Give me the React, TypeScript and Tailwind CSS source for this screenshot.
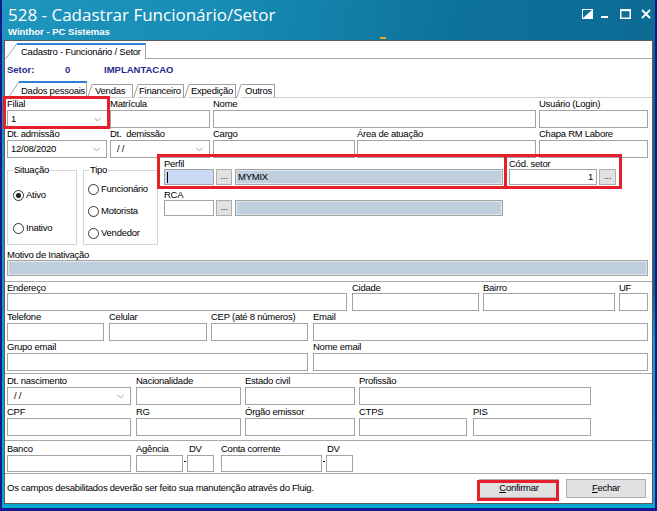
import React from "react";
import { ChevronDown } from "lucide-react";

const Lbl = ({ children, cls = "h-[12px] leading-[12px]" }: { children?: React.ReactNode; cls?: string }) => (
  <div className={"whitespace-nowrap " + cls}>{children}</div>
);

const Box = ({ cls = "h-[18px]", children }: { cls?: string; children?: React.ReactNode }) => (
  <div className={"border border-[#a3a3a3] bg-white flex items-center " + cls}>{children}</div>
);

const Combo = ({ value, cls = "h-[18px]", textCls = "pl-[3px]" }: { value: string; cls?: string; textCls?: string }) => (
  <div className={"border border-[#a3a3a3] bg-white flex items-center justify-between pr-[4px] " + cls}>
    <span className={textCls}>{value}</span>
    <ChevronDown size={11} strokeWidth={1.2} color="#555" />
  </div>
);

const Btn3 = ({ cls }: { cls: string }) => (
  <div className={"h-[16px] border border-[#adadad] bg-[#e1e1e1] flex items-center justify-center leading-none pb-[3px] text-[#222] " + cls}>
    ...
  </div>
);

const Radio = ({ label, checked }: { label: string; checked?: boolean }) => (
  <div className="flex items-center h-[12px]">
    <div className="w-[11px] h-[11px] rounded-full border border-[#333] bg-white flex items-center justify-center">
      {checked && <div className="w-[5px] h-[5px] rounded-full bg-[#1e1e1e]" />}
    </div>
    <span className="ml-[2px]">{label}</span>
  </div>
);

const Diag = ({ cls, h, w }: { cls: string; h: number; w: number }) => (
  <svg className={cls} viewBox={`0 0 ${w} ${h}`}>
    <line x1="0.5" y1={h} x2={w} y2="0.5" stroke="#a0a0a0" strokeWidth="1" />
  </svg>
);

const Sep = () => <div className="-ml-[2px] h-px bg-[#a9a9a9]" />;

export default function App() {
  return (
    <div className="relative w-[657px] h-[511px] bg-[#17178f] pl-[2px] pr-[2px] pb-[3px] overflow-hidden font-['Liberation_Sans',Arial,sans-serif] text-[9.5px] tracking-[-0.25px] text-black">
      <div className="flex flex-col h-full bg-[linear-gradient(to_bottom,rgba(6,166,200,0)_58%,#07a6c9_68%,#08a9cb_100%),linear-gradient(100deg,#1f96bd_0%,#178cb4_30%,#0d729b_62%,#0b6890_100%)]">
        {/* title bar */}
        <div className="h-[40px] flex justify-between">
          <div className="flex flex-col pl-[6px] pt-[4px] text-white tracking-normal">
            <div className="h-[22px] leading-[22px] text-[17px] font-['Open_Sans',Arial,sans-serif] whitespace-nowrap">
              528 - Cadastrar Funcionário/Setor
            </div>
            <div className="h-[12px] leading-[12px] text-[9.5px] font-bold whitespace-nowrap">Winthor - PC Sistemas</div>
          </div>
          <div className="flex items-start pt-[9px] pr-[4px]">
            <svg width="11" height="10" viewBox="0 0 11 10">
              <rect x="0.5" y="0.5" width="10" height="9" fill="none" stroke="#fff" strokeWidth="1" />
              <polygon points="0.5,9.5 10.5,0.5 10.5,9.5" fill="#fff" />
            </svg>
            <div className="ml-[8px] mt-[7px] w-[7px] h-[2px] bg-white" />
            <svg className="ml-[12px]" width="11" height="10" viewBox="0 0 11 10">
              <rect x="0.75" y="1" width="9.5" height="8.25" fill="none" stroke="#fff" strokeWidth="1.5" />
              <line x1="0" y1="1.2" x2="11" y2="1.2" stroke="#fff" strokeWidth="2" />
            </svg>
            <svg className="ml-[10px]" width="10" height="10" viewBox="0 0 10 10">
              <path d="M1 1 L9 9 M9 1 L1 9" stroke="#fff" strokeWidth="1.8" />
            </svg>
          </div>
        </div>

        {/* main panel */}
        <div className="flex-1 mx-[2px] mb-[4px] bg-white border border-[#5a5a5a] flex flex-col">
          {/* top tab */}
          <div className="flex items-end h-[18px]">
            <Diag cls="w-[12px] h-[16px]" w={12} h={16} />
            <div className="w-[129px] h-[16px] border-t-2 border-[#2f7fd6] border-r border-r-[#a0a0a0] flex items-center pl-[4px] whitespace-nowrap">
              Cadastro - Funcionário / Setor
            </div>
            <div className="flex-1 h-px bg-[#a9a9a9]" />
          </div>

          {/* setor */}
          <div className="h-[21px] flex items-center pl-[2px] pt-[2px] font-bold text-[#1f2a8a] text-[9.5px] tracking-normal">
            <span className="w-[58px]">Setor:</span>
            <span className="w-[39px]">0</span>
            <span>IMPLANTACAO</span>
          </div>

          {/* tabs */}
          <div className="flex items-end h-[18px]">
            <div className="w-[3px] h-px bg-[#d0d0d0]" />
            <Diag cls="w-[11px] h-[17px]" w={11} h={17} />
            <div className="w-[68px] h-[17px] border-t-2 border-[#2f7fd6] border-r border-r-[#a0a0a0] flex items-center pl-[2px] pt-[1px] whitespace-nowrap">
              Dados pessoais
            </div>
            <Diag cls="w-[5px] h-[14px]" w={5} h={14} />
            <div className="w-[41px] h-[14px] border-t border-r border-b border-[#a0a0a0] border-b-[#d0d0d0] flex items-center pl-[3px]">Vendas</div>
            <Diag cls="w-[5px] h-[14px]" w={5} h={14} />
            <div className="w-[46px] h-[14px] border-t border-r border-b border-[#a0a0a0] border-b-[#d0d0d0] flex items-center pl-[1px]">Financeiro</div>
            <Diag cls="w-[5px] h-[14px]" w={5} h={14} />
            <div className="w-[47px] h-[14px] border-t border-r border-b border-[#a0a0a0] border-b-[#d0d0d0] flex items-center pl-[2px]">Expedição</div>
            <Diag cls="w-[5px] h-[14px]" w={5} h={14} />
            <div className="w-[34px] h-[14px] border-t border-r border-b border-[#a0a0a0] border-b-[#d0d0d0] flex items-center pl-[4px]">Outros</div>
            <div className="flex-1 h-px bg-[#d0d0d0]" />
          </div>

          {/* form */}
          <div className="flex-1 flex flex-col pl-[2px]">
            {/* row 1 */}
            <div className="flex">
              <div className="flex flex-col w-[101px]">
                <Lbl>Filial</Lbl>
                <Combo value="1" />
              </div>
              <div className="flex flex-col w-[100px] ml-[2px]">
                <Lbl>Matrícula</Lbl>
                <Box />
              </div>
              <div className="flex flex-col w-[323px] ml-[3px]">
                <Lbl>Nome</Lbl>
                <Box />
              </div>
              <div className="flex flex-col w-[109px] ml-[3px]">
                <Lbl>Usuário (Login)</Lbl>
                <Box />
              </div>
            </div>
            {/* row 2 */}
            <div className="flex">
              <div className="flex flex-col w-[100px]">
                <Lbl>Dt. admissão</Lbl>
                <Combo value="12/08/2020" />
              </div>
              <div className="flex flex-col w-[100px] ml-[3px]">
                <Lbl>Dt.&nbsp;&nbsp;demissão</Lbl>
                <Combo value="/ /" textCls="pl-[6px]" />
              </div>
              <div className="flex flex-col w-[142px] ml-[3px]">
                <Lbl>Cargo</Lbl>
                <Box />
              </div>
              <div className="flex flex-col w-[179px] ml-[2px]">
                <Lbl>Área de atuação</Lbl>
                <Box />
              </div>
              <div className="flex flex-col w-[109px] ml-[3px]">
                <Lbl>Chapa RM Labore</Lbl>
                <Box />
              </div>
            </div>

            {/* middle */}
            <div className="flex h-[91px]">
              <div className="relative mt-[12px] w-[70px] h-[75px] border border-[#d5d5d5]">
                <div className="absolute -top-[7px] left-[5px] bg-white px-[1px] leading-[12px]">Situação</div>
                <div className="flex flex-col pt-[18px] pl-[5px] gap-[21px]">
                  <Radio label="Ativo" checked />
                  <Radio label="Inativo" />
                </div>
              </div>
              <div className="relative ml-[6px] mt-[12px] w-[75px] h-[75px] border border-[#d5d5d5]">
                <div className="absolute -top-[7px] left-[5px] bg-white px-[1px] leading-[12px]">Tipo</div>
                <div className="flex flex-col pt-[12px] pl-[4px] gap-[10px]">
                  <Radio label="Funcionário" />
                  <Radio label="Motorista" />
                  <Radio label="Vendedor" />
                </div>
              </div>
              <div className="ml-[6px] flex flex-col">
                <Lbl cls="h-[11px] leading-[11px]">Perfil</Lbl>
                <div className="flex h-[16px]">
                  <div className="w-[50px] h-[16px] border border-[#a3a3a3] bg-[#c9daf2] flex items-center pl-[2px]">
                    <div className="w-px h-[11px] bg-black" />
                  </div>
                  <Btn3 cls="ml-[2px] w-[16px]" />
                  <div className="ml-[3px] w-[268px] h-[16px] border border-[#a3a3a3] bg-[#c0cfdd] shadow-[inset_0_0_0_1px_#dfe7ee] flex items-center pl-[2px]">
                    MYMIX
                  </div>
                </div>
                <Lbl cls="mt-[4px] h-[11px] leading-[11px]">RCA</Lbl>
                <div className="flex h-[16px]">
                  <div className="w-[50px] h-[16px] border border-[#a3a3a3] bg-white" />
                  <Btn3 cls="ml-[2px] w-[16px]" />
                  <div className="ml-[3px] w-[268px] h-[16px] border border-[#a3a3a3] bg-[#c0cfdd] shadow-[inset_0_0_0_1px_#dfe7ee]" />
                </div>
              </div>
              <div className="ml-[6px] flex flex-col">
                <Lbl cls="h-[11px] leading-[11px]">Cód. setor</Lbl>
                <div className="flex h-[16px]">
                  <div className="w-[88px] h-[16px] border border-[#a3a3a3] bg-white flex items-center justify-end pr-[3px]">1</div>
                  <Btn3 cls="ml-[2px] w-[17px]" />
                </div>
              </div>
            </div>

            {/* motivo */}
            <Lbl cls="h-[11px] leading-[11px]">Motivo de Inativação</Lbl>
            <div className="w-[641px] h-[16px] border border-[#a3a3a3] bg-[#c0cfdd] shadow-[inset_0_0_0_1px_#dfe7ee]" />

            <div className="mt-[5px]">
              <Sep />
            </div>

            {/* endereço */}
            <div className="flex">
              <div className="flex flex-col w-[340px]">
                <Lbl cls="h-[11px] leading-[11px]">Endereço</Lbl>
                <Box />
              </div>
              <div className="flex flex-col w-[127px] ml-[5px]">
                <Lbl cls="h-[11px] leading-[11px]">Cidade</Lbl>
                <Box />
              </div>
              <div className="flex flex-col w-[132px] ml-[4px]">
                <Lbl cls="h-[11px] leading-[11px]">Bairro</Lbl>
                <Box />
              </div>
              <div className="flex flex-col w-[29px] ml-[4px]">
                <Lbl cls="h-[11px] leading-[11px]">UF</Lbl>
                <Box />
              </div>
            </div>
            <div className="flex">
              <div className="flex flex-col w-[97px]">
                <Lbl>Telefone</Lbl>
                <Box />
              </div>
              <div className="flex flex-col w-[98px] ml-[5px]">
                <Lbl>Celular</Lbl>
                <Box />
              </div>
              <div className="flex flex-col w-[97px] ml-[4px]">
                <Lbl>CEP (até 8 números)</Lbl>
                <Box />
              </div>
              <div className="flex flex-col w-[335px] ml-[5px]">
                <Lbl>Email</Lbl>
                <Box />
              </div>
            </div>
            <div className="flex">
              <div className="flex flex-col w-[301px]">
                <Lbl>Grupo email</Lbl>
                <Box />
              </div>
              <div className="flex flex-col w-[335px] ml-[5px]">
                <Lbl>Nome email</Lbl>
                <Box />
              </div>
            </div>

            <div className="mt-[2px]">
              <Sep />
            </div>

            {/* nascimento */}
            <div className="flex mt-[1px]">
              <div className="flex flex-col w-[124px]">
                <Lbl>Dt. nascimento</Lbl>
                <Combo value="/ /" textCls="pl-[6px]" />
              </div>
              <div className="flex flex-col w-[105px] ml-[5px]">
                <Lbl>Nacionalidade</Lbl>
                <Box />
              </div>
              <div className="flex flex-col w-[110px] ml-[4px]">
                <Lbl>Estado civil</Lbl>
                <Box />
              </div>
              <div className="flex flex-col w-[232px] ml-[4px]">
                <Lbl>Profissão</Lbl>
                <Box />
              </div>
            </div>
            <div className="flex">
              <div className="flex flex-col w-[124px]">
                <Lbl cls="h-[13px] leading-[13px]">CPF</Lbl>
                <Box />
              </div>
              <div className="flex flex-col w-[105px] ml-[5px]">
                <Lbl cls="h-[13px] leading-[13px]">RG</Lbl>
                <Box />
              </div>
              <div className="flex flex-col w-[110px] ml-[4px]">
                <Lbl cls="h-[13px] leading-[13px]">Órgão emissor</Lbl>
                <Box />
              </div>
              <div className="flex flex-col w-[108px] ml-[4px]">
                <Lbl cls="h-[13px] leading-[13px]">CTPS</Lbl>
                <Box />
              </div>
              <div className="flex flex-col w-[118px] ml-[6px]">
                <Lbl cls="h-[13px] leading-[13px]">PIS</Lbl>
                <Box />
              </div>
            </div>

            <div className="mt-[4px]">
              <Sep />
            </div>

            {/* banco */}
            <div className="flex mt-[2px]">
              <div className="flex flex-col w-[124px]">
                <Lbl>Banco</Lbl>
                <Box cls="h-[17px]" />
              </div>
              <div className="flex flex-col w-[47px] ml-[5px]">
                <Lbl>Agência</Lbl>
                <Box cls="h-[17px]" />
              </div>
              <div className="w-[4px] flex flex-col">
                <div className="mt-[18px] ml-[1px] w-[2px] h-px bg-black" />
              </div>
              <div className="flex flex-col w-[27px]">
                <Lbl cls="h-[12px] leading-[12px] pl-[2px]">DV</Lbl>
                <Box cls="h-[17px]" />
              </div>
              <div className="flex flex-col w-[101px] ml-[7px]">
                <Lbl>Conta corrente</Lbl>
                <Box cls="h-[17px]" />
              </div>
              <div className="w-[4px] flex flex-col">
                <div className="mt-[18px] ml-[1px] w-[2px] h-px bg-black" />
              </div>
              <div className="flex flex-col w-[27px]">
                <Lbl cls="h-[12px] leading-[12px] pl-[1px]">DV</Lbl>
                <Box cls="h-[17px]" />
              </div>
            </div>

            <div className="mt-[1px]">
              <Sep />
            </div>

            {/* footer */}
            <div className="flex-1 flex items-center pr-[6px]">
              <div className="flex-1 whitespace-nowrap">
                Os campos desabilitados deverão ser feito sua manutenção através do Fluig.
              </div>
              <div className="w-[80px] h-[19px] border border-[#adadad] bg-[#e1e1e1] flex items-center justify-center">
                <span><span className="underline">C</span>onfirmar</span>
              </div>
              <div className="ml-[7px] w-[80px] h-[19px] border border-[#adadad] bg-[#e1e1e1] flex items-center justify-center">
                <span><span className="underline">F</span>echar</span>
              </div>
            </div>
          </div>
        </div>
      </div>

      {/* annotation overlays */}
      <div className="absolute left-[380px] top-[37px] w-[6px] h-[2px] bg-[#f0a020]" />
      <div className="absolute left-[3px] top-[96px] w-[107px] h-[33px] border-[3px] border-[#e5202b]" />
      <div className="absolute left-[157px] top-[154px] w-[350px] h-[35px] border-[3px] border-[#e5202b]" />
      <div className="absolute left-[504px] top-[154px] w-[118px] h-[35px] border-[3px] border-[#e5202b]" />
      <div className="absolute left-[477px] top-[480px] w-[82px] h-[21px] border-[3px] border-[#e5202b]" />
    </div>
  );
}
